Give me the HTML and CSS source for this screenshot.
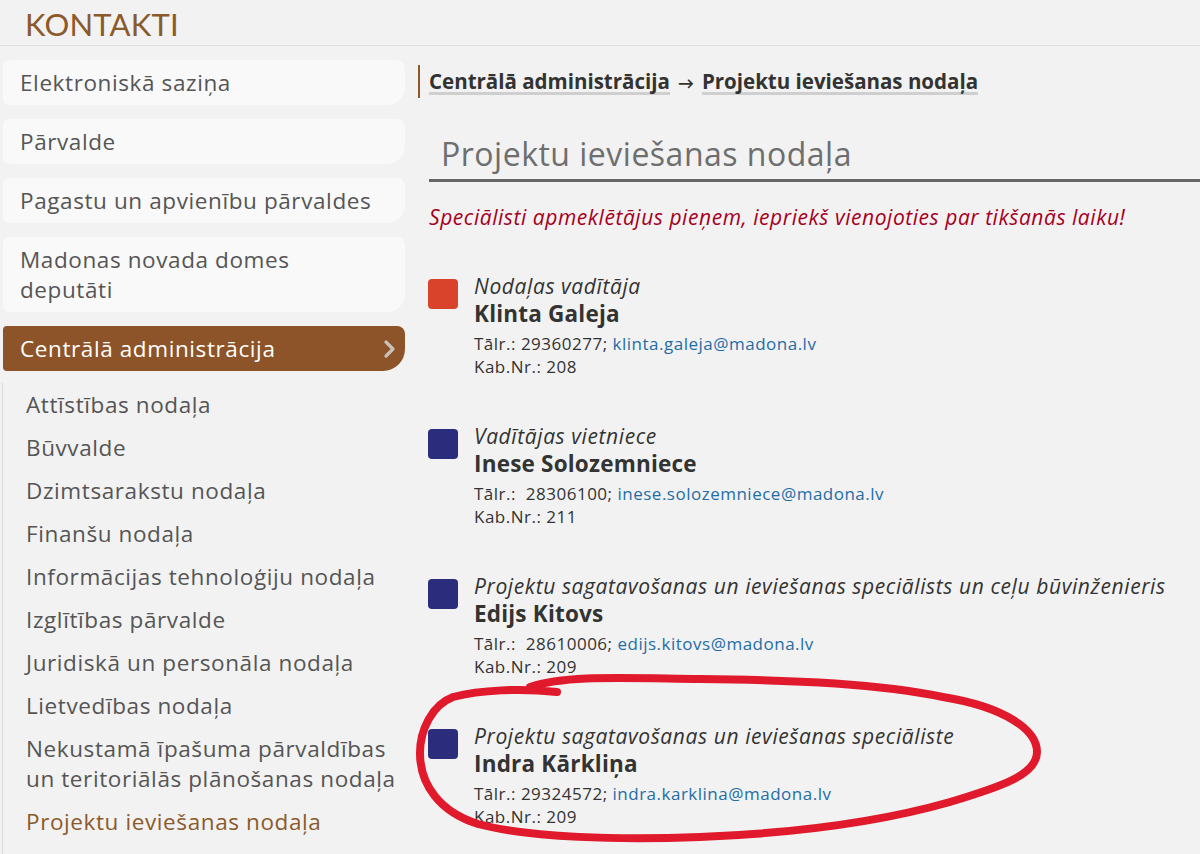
FILE: index.html
```html
<!DOCTYPE html>
<html lang="lv">
<head>
<meta charset="utf-8">
<title>Kontakti</title>
<link rel="stylesheet" href="styles.css">
</head>
<body>
<header class="page-head">
  <h1 class="page-title">KONTAKTI</h1>
</header>
<div class="layout">
  <nav class="sidebar">
    <a class="menu-item" href="#">Elektroniskā saziņa</a>
    <a class="menu-item" href="#">Pārvalde</a>
    <a class="menu-item" href="#">Pagastu un apvienību pārvaldes</a>
    <a class="menu-item" href="#">Madonas novada domes deputāti</a>
    <a class="menu-item active" href="#">Centrālā administrācija
      <svg class="chev" width="14" height="20" viewBox="0 0 14 20"><path d="M3 3 L10 10 L3 17" fill="none" stroke="#c9c2bb" stroke-width="3.2" stroke-linecap="round" stroke-linejoin="round"/></svg>
    </a>
    <ul class="sub-list">
      <li><a href="#">Attīstības nodaļa</a></li>
      <li><a href="#">Būvvalde</a></li>
      <li><a href="#">Dzimtsarakstu nodaļa</a></li>
      <li><a href="#">Finanšu nodaļa</a></li>
      <li><a href="#">Informācijas tehnoloģiju nodaļa</a></li>
      <li><a href="#">Izglītības pārvalde</a></li>
      <li><a href="#">Juridiskā un personāla nodaļa</a></li>
      <li><a href="#">Lietvedības nodaļa</a></li>
      <li><a href="#">Nekustamā īpašuma pārvaldības un teritoriālās plānošanas nodaļa</a></li>
      <li><a class="current" href="#">Projektu ieviešanas nodaļa</a></li>
    </ul>
  </nav>
  <main class="content">
    <div class="crumbs">
      <a href="#">Centrālā administrācija</a><span class="arrow">→</span><a href="#">Projektu ieviešanas nodaļa</a>
    </div>
    <div class="dept">
      <h2 class="dept-title">Projektu ieviešanas nodaļa</h2>
      <p class="notice">Speciālisti apmeklētājus pieņem, iepriekš vienojoties par tikšanās laiku!</p>

      <div class="contact">
        <span class="marker red"></span>
        <div class="info">
          <div class="role">Nodaļas vadītāja</div>
          <div class="name">Klinta Galeja</div>
          <div class="line">Tālr.: 29360277; <a href="#">klinta.galeja@madona.lv</a></div>
          <div class="line">Kab.Nr.: 208</div>
        </div>
      </div>

      <div class="contact">
        <span class="marker blue"></span>
        <div class="info">
          <div class="role">Vadītājas vietniece</div>
          <div class="name">Inese Solozemniece</div>
          <div class="line">Tālr.:&nbsp; 28306100; <a href="#">inese.solozemniece@madona.lv</a></div>
          <div class="line">Kab.Nr.: 211</div>
        </div>
      </div>

      <div class="contact">
        <span class="marker blue"></span>
        <div class="info">
          <div class="role">Projektu sagatavošanas un ieviešanas speciālists un ceļu būvinženieris</div>
          <div class="name">Edijs Kitovs</div>
          <div class="line">Tālr.:&nbsp; 28610006; <a href="#">edijs.kitovs@madona.lv</a></div>
          <div class="line">Kab.Nr.: 209</div>
        </div>
      </div>

      <div class="contact">
        <span class="marker blue"></span>
        <div class="info">
          <div class="role">Projektu sagatavošanas un ieviešanas speciāliste</div>
          <div class="name">Indra Kārkliņa</div>
          <div class="line">Tālr.: 29324572; <a href="#">indra.karklina@madona.lv</a></div>
          <div class="line">Kab.Nr.: 209</div>
        </div>
      </div>
    </div>
  </main>
</div>
<svg class="annotation" width="1200" height="854" viewBox="0 0 1200 854">
  <path d="M557 692 C520 688 480 690 453 697 C432 705 420 730 420 753 C420 785 440 812 478 824 C530 838 620 840 700 837 C800 833 880 822 950 802 C1000 787 1037 775 1037 752 C1037 730 1005 707 943 697 C880 684 800 680 700 679 C620 678 565 675 530 687" fill="none" stroke="#e01a2c" stroke-width="8" stroke-linecap="round" stroke-linejoin="round"/>
</svg>
</body>
</html>
```

FILE: styles.css
```css
* { box-sizing: border-box; }
html, body { margin: 0; padding: 0; }
body {
  background: #f2f2f2;
  font-family: "Open Sans", "Lato", sans-serif;
  color: #333;
  width: 1200px;
  height: 854px;
  overflow: hidden;
  position: relative;
}
a { text-decoration: none; color: inherit; }

.page-head {
  height: 46px;
  border-bottom: 1px solid #e0e0e0;
  padding-left: 25px;
}
.page-title {
  margin: 0;
  font-family: "Lato", sans-serif;
  font-weight: 400;
  font-size: 31px;
  line-height: 48px;
  color: #8b5a2b;
  letter-spacing: 0.2px;
}

.layout { display: flex; align-items: flex-start; }

.sidebar {
  width: 405px;
  flex: none;
  padding-top: 14px;
  display: flex;
  flex-direction: column;
}
.menu-item {
  display: flex;
  align-items: center;
  justify-content: space-between;
  margin-left: 3px;
  margin-bottom: 14px;
  padding: 7.5px 17px;
  min-height: 45px;
  background: #f9f9f9;
  border-radius: 6px 8px 18px 6px;
  font-size: 22.5px;
  letter-spacing: 0.6px;
  line-height: 30px;
  color: #555;
}
.menu-item.active {
  background: #8c5428;
  color: #fff;
  border-radius: 4px 8px 22px 4px;
  margin-bottom: 0;
  padding-right: 8px;
}
.chev { flex: none; }

.sub-list {
  list-style: none;
  margin: 12px 0 0 2px;
  padding: 0 0 40px 23px;
  border-left: 1px solid #d9d9d9;
}
.sub-list li {
  padding: 6.5px 0;
  font-size: 22.5px;
  letter-spacing: 0.6px;
  line-height: 30px;
  color: #555;
}
.sub-list .current { color: #8b5a2b; }

.content {
  flex: 1;
  padding-left: 13px;
  padding-top: 19px;
}
.crumbs {
  border-left: 2px solid #8b5a2b;
  padding: 2px 0 3px 9px;
  font-weight: 700;
  font-size: 20.5px;
  letter-spacing: 0;
  color: #333;
}
.crumbs a {
  display: inline-block;
  line-height: 22px;
  border-bottom: 3px solid #cfcfcf;
}
.crumbs .arrow { margin: 0 8px; font-size: 16px; }

.dept { padding-left: 11px; }
.dept-title {
  margin: 35px 0 0;
  padding: 0 0 4px 12px;
  border-bottom: 3px solid #666;
  font-size: 32px;
  letter-spacing: 0.5px;
  line-height: 42px;
  font-weight: 400;
  color: #6e6e6e;
}
.notice {
  margin: 23px 0 45px;
  font-style: italic;
  font-size: 21px;
  letter-spacing: 0.55px;
  line-height: 24px;
  color: #a5001d;
}

.contact {
  display: flex;
  align-items: flex-start;
  margin-bottom: 46px;
}
.marker {
  flex: none;
  width: 30px;
  height: 30px;
  border-radius: 4px;
  margin: 5px 16px 0 -1px;
}
.marker.red { background: #d9432b; }
.marker.blue { background: #2b2d7c; }
.role {
  font-style: italic;
  font-size: 21px;
  letter-spacing: 0.6px;
  line-height: 24px;
  color: #333;
}
.name {
  font-weight: 700;
  font-size: 22.5px;
  letter-spacing: 0.2px;
  line-height: 32px;
  color: #333;
}
.line {
  font-size: 17px;
  letter-spacing: 0.5px;
  line-height: 23px;
  color: #333;
}
.name + .line { margin-top: 2px; }
.line a { color: #1f6da6; }

.annotation {
  position: absolute;
  left: 0;
  top: 0;
  pointer-events: none;
}
```
